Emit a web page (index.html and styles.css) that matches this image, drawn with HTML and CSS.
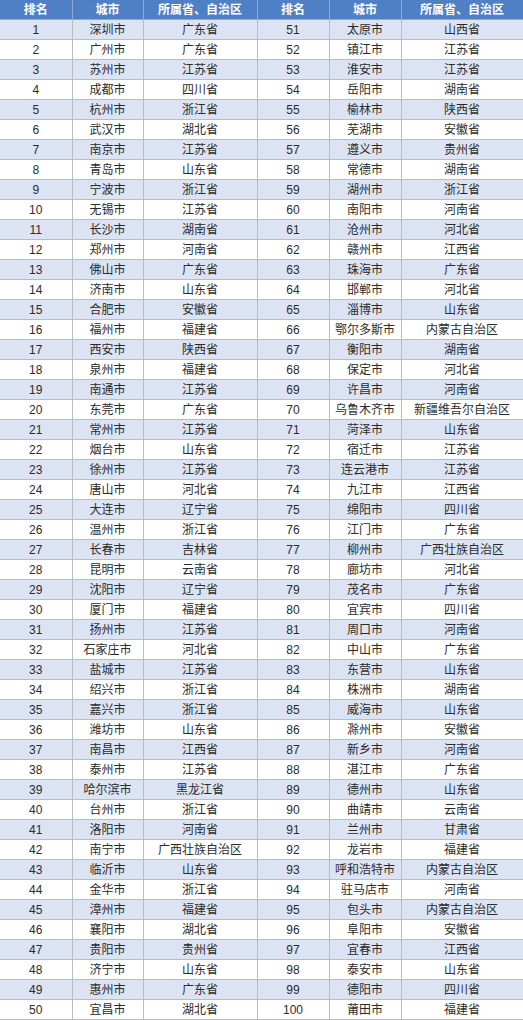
FILE: index.html
```html
<!DOCTYPE html>
<html lang="zh-CN">
<head>
<meta charset="utf-8">
<title>城市排名</title>
<link rel="stylesheet" href="styles.css">
</head>
<body>
<table class="rank">
<colgroup>
<col class="c1"><col class="c2"><col class="c3"><col class="c4"><col class="c5"><col class="c6">
</colgroup>
<thead>
<tr><th>排名</th><th>城市</th><th>所属省、自治区</th><th>排名</th><th>城市</th><th>所属省、自治区</th></tr>
</thead>
<tbody>
<tr><td>1</td><td>深圳市</td><td>广东省</td><td>51</td><td>太原市</td><td>山西省</td></tr>
<tr><td>2</td><td>广州市</td><td>广东省</td><td>52</td><td>镇江市</td><td>江苏省</td></tr>
<tr><td>3</td><td>苏州市</td><td>江苏省</td><td>53</td><td>淮安市</td><td>江苏省</td></tr>
<tr><td>4</td><td>成都市</td><td>四川省</td><td>54</td><td>岳阳市</td><td>湖南省</td></tr>
<tr><td>5</td><td>杭州市</td><td>浙江省</td><td>55</td><td>榆林市</td><td>陕西省</td></tr>
<tr><td>6</td><td>武汉市</td><td>湖北省</td><td>56</td><td>芜湖市</td><td>安徽省</td></tr>
<tr><td>7</td><td>南京市</td><td>江苏省</td><td>57</td><td>遵义市</td><td>贵州省</td></tr>
<tr><td>8</td><td>青岛市</td><td>山东省</td><td>58</td><td>常德市</td><td>湖南省</td></tr>
<tr><td>9</td><td>宁波市</td><td>浙江省</td><td>59</td><td>湖州市</td><td>浙江省</td></tr>
<tr><td>10</td><td>无锡市</td><td>江苏省</td><td>60</td><td>南阳市</td><td>河南省</td></tr>
<tr><td>11</td><td>长沙市</td><td>湖南省</td><td>61</td><td>沧州市</td><td>河北省</td></tr>
<tr><td>12</td><td>郑州市</td><td>河南省</td><td>62</td><td>赣州市</td><td>江西省</td></tr>
<tr><td>13</td><td>佛山市</td><td>广东省</td><td>63</td><td>珠海市</td><td>广东省</td></tr>
<tr><td>14</td><td>济南市</td><td>山东省</td><td>64</td><td>邯郸市</td><td>河北省</td></tr>
<tr><td>15</td><td>合肥市</td><td>安徽省</td><td>65</td><td>淄博市</td><td>山东省</td></tr>
<tr><td>16</td><td>福州市</td><td>福建省</td><td>66</td><td>鄂尔多斯市</td><td>内蒙古自治区</td></tr>
<tr><td>17</td><td>西安市</td><td>陕西省</td><td>67</td><td>衡阳市</td><td>湖南省</td></tr>
<tr><td>18</td><td>泉州市</td><td>福建省</td><td>68</td><td>保定市</td><td>河北省</td></tr>
<tr><td>19</td><td>南通市</td><td>江苏省</td><td>69</td><td>许昌市</td><td>河南省</td></tr>
<tr><td>20</td><td>东莞市</td><td>广东省</td><td>70</td><td>乌鲁木齐市</td><td>新疆维吾尔自治区</td></tr>
<tr><td>21</td><td>常州市</td><td>江苏省</td><td>71</td><td>菏泽市</td><td>山东省</td></tr>
<tr><td>22</td><td>烟台市</td><td>山东省</td><td>72</td><td>宿迁市</td><td>江苏省</td></tr>
<tr><td>23</td><td>徐州市</td><td>江苏省</td><td>73</td><td>连云港市</td><td>江苏省</td></tr>
<tr><td>24</td><td>唐山市</td><td>河北省</td><td>74</td><td>九江市</td><td>江西省</td></tr>
<tr><td>25</td><td>大连市</td><td>辽宁省</td><td>75</td><td>绵阳市</td><td>四川省</td></tr>
<tr><td>26</td><td>温州市</td><td>浙江省</td><td>76</td><td>江门市</td><td>广东省</td></tr>
<tr><td>27</td><td>长春市</td><td>吉林省</td><td>77</td><td>柳州市</td><td>广西壮族自治区</td></tr>
<tr><td>28</td><td>昆明市</td><td>云南省</td><td>78</td><td>廊坊市</td><td>河北省</td></tr>
<tr><td>29</td><td>沈阳市</td><td>辽宁省</td><td>79</td><td>茂名市</td><td>广东省</td></tr>
<tr><td>30</td><td>厦门市</td><td>福建省</td><td>80</td><td>宜宾市</td><td>四川省</td></tr>
<tr><td>31</td><td>扬州市</td><td>江苏省</td><td>81</td><td>周口市</td><td>河南省</td></tr>
<tr><td>32</td><td>石家庄市</td><td>河北省</td><td>82</td><td>中山市</td><td>广东省</td></tr>
<tr><td>33</td><td>盐城市</td><td>江苏省</td><td>83</td><td>东营市</td><td>山东省</td></tr>
<tr><td>34</td><td>绍兴市</td><td>浙江省</td><td>84</td><td>株洲市</td><td>湖南省</td></tr>
<tr><td>35</td><td>嘉兴市</td><td>浙江省</td><td>85</td><td>威海市</td><td>山东省</td></tr>
<tr><td>36</td><td>潍坊市</td><td>山东省</td><td>86</td><td>滁州市</td><td>安徽省</td></tr>
<tr><td>37</td><td>南昌市</td><td>江西省</td><td>87</td><td>新乡市</td><td>河南省</td></tr>
<tr><td>38</td><td>泰州市</td><td>江苏省</td><td>88</td><td>湛江市</td><td>广东省</td></tr>
<tr><td>39</td><td>哈尔滨市</td><td>黑龙江省</td><td>89</td><td>德州市</td><td>山东省</td></tr>
<tr><td>40</td><td>台州市</td><td>浙江省</td><td>90</td><td>曲靖市</td><td>云南省</td></tr>
<tr><td>41</td><td>洛阳市</td><td>河南省</td><td>91</td><td>兰州市</td><td>甘肃省</td></tr>
<tr><td>42</td><td>南宁市</td><td>广西壮族自治区</td><td>92</td><td>龙岩市</td><td>福建省</td></tr>
<tr><td>43</td><td>临沂市</td><td>山东省</td><td>93</td><td>呼和浩特市</td><td>内蒙古自治区</td></tr>
<tr><td>44</td><td>金华市</td><td>浙江省</td><td>94</td><td>驻马店市</td><td>河南省</td></tr>
<tr><td>45</td><td>漳州市</td><td>福建省</td><td>95</td><td>包头市</td><td>内蒙古自治区</td></tr>
<tr><td>46</td><td>襄阳市</td><td>湖北省</td><td>96</td><td>阜阳市</td><td>安徽省</td></tr>
<tr><td>47</td><td>贵阳市</td><td>贵州省</td><td>97</td><td>宜春市</td><td>江西省</td></tr>
<tr><td>48</td><td>济宁市</td><td>山东省</td><td>98</td><td>泰安市</td><td>山东省</td></tr>
<tr><td>49</td><td>惠州市</td><td>广东省</td><td>99</td><td>德阳市</td><td>四川省</td></tr>
<tr><td>50</td><td>宜昌市</td><td>湖北省</td><td>100</td><td>莆田市</td><td>福建省</td></tr>
</tbody>
</table>
</body>
</html>
```
FILE: styles.css
```css
html, body {
  margin: 0;
  padding: 0;
  background: #ffffff;
}
.rank {
  width: 523px;
  border-collapse: collapse;
  table-layout: fixed;
  font-family: "Liberation Sans", "Noto Sans CJK SC", sans-serif;
  font-size: 12px;
  color: #2b2b2b;
}
.c1 { width: 72px; }
.c2 { width: 71px; }
.c3 { width: 114px; }
.c4 { width: 72px; }
.c5 { width: 72px; }
.c6 { width: 122px; }
.rank th,
.rank td {
  height: 19px;
  padding: 0;
  text-align: center;
  vertical-align: middle;
  line-height: 18px;
  border: 1px solid #bcbcbc;
  white-space: nowrap;
  overflow: hidden;
}
.rank th {
  background: #4f7fc4;
  color: #ffffff;
  font-weight: bold;
  border-color: #8ea9d6;
  border-top: none;
}
.rank tbody tr:nth-child(odd) td {
  background: #dce3f3;
}
.rank tbody tr:nth-child(even) td {
  background: #ffffff;
}
.rank tr > :first-child { border-left: none; }
```
